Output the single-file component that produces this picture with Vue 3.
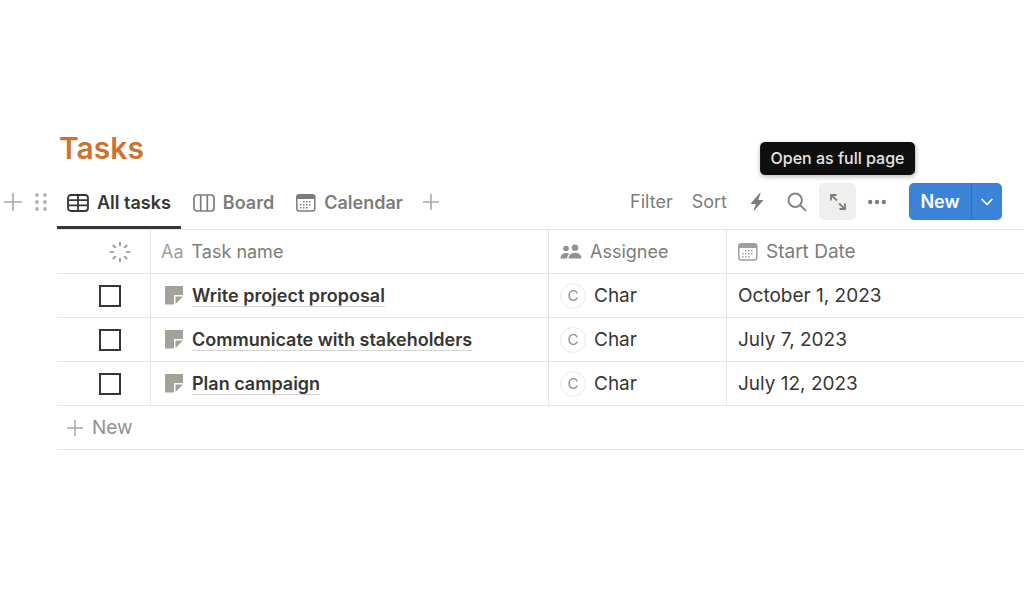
<script setup>
import { ref } from 'vue'

const tasks = ref([
  { name: 'Write project proposal', assignee: 'Char', date: 'October 1, 2023', done: false },
  { name: 'Communicate with stakeholders', assignee: 'Char', date: 'July 7, 2023', done: false },
  { name: 'Plan campaign', assignee: 'Char', date: 'July 12, 2023', done: false },
])
const rays = [0, 45, 90, 135, 180, 225, 270, 315]
</script>

<template>
  <main class="page">
    <h1>Tasks</h1>

    <div class="bar">
      <div class="gutter">
        <button class="bare" aria-label="Add block">
          <svg width="18" height="18" viewBox="0 0 18 18"><path d="M9 0v18M0 9h18" stroke="#a9a8a6" stroke-width="1.6" /></svg>
        </button>
        <button class="bare" aria-label="Drag">
          <svg width="12" height="20" viewBox="0 0 12 20" fill="#b3b2b0">
            <circle cx="2" cy="3" r="1.9" /><circle cx="10" cy="3" r="1.9" />
            <circle cx="2" cy="10" r="1.9" /><circle cx="10" cy="10" r="1.9" />
            <circle cx="2" cy="17" r="1.9" /><circle cx="10" cy="17" r="1.9" />
          </svg>
        </button>
      </div>

      <div class="toolbar">
        <nav class="tabs">
          <button class="tab active">
            <svg width="22" height="18" viewBox="0 0 22 18" fill="none" stroke="currentColor" stroke-width="1.8">
              <rect x="1" y="1" width="20" height="16" rx="3" /><path d="M1 6.2h20M1 11.4h20M11 1v16" />
            </svg>
            All tasks
          </button>
          <button class="tab">
            <svg width="22" height="18" viewBox="0 0 22 18" fill="none" stroke="currentColor" stroke-width="1.7">
              <rect x="1" y="1" width="20" height="16" rx="3" /><path d="M7.7 1v16M14.3 1v16" />
            </svg>
            Board
          </button>
          <button class="tab">
            <svg width="20" height="18" viewBox="0 0 20 18">
              <rect x=".8" y=".8" width="18" height="16.2" rx="2.5" fill="none" stroke="currentColor" stroke-width="1.5" />
              <path d="M.8 5V3A2.2 2.2 0 0 1 3 .8h13.6A2.2 2.2 0 0 1 18.8 3v2z" fill="currentColor" />
              <path d="M7 7.8h9M4 10.8h12M4 13.8h9" stroke="currentColor" stroke-width="1.5" stroke-dasharray="1.5 1.5" />
            </svg>
            Calendar
          </button>
          <button class="bare add" aria-label="Add view">
            <svg width="16" height="16" viewBox="0 0 16 16"><path d="M8 0v16M0 8h16" stroke="#a9a8a6" stroke-width="1.6" /></svg>
          </button>
        </nav>

        <div class="actions">
          <button class="bare text">Filter</button>
          <button class="bare text">Sort</button>
          <button class="bare icon" aria-label="Automations">
            <svg width="14" height="20" viewBox="0 0 14 20"><path d="M9.8 1 1 11.2q-.6.8.4.8h4.4L3.7 18.3q-.3 1.1.6.3L13 8.8q.6-.8-.4-.8H8.3l2.2-6.5q.2-1-.7-.5z" fill="#7d7c79" /></svg>
          </button>
          <button class="bare icon" aria-label="Search">
            <svg width="20" height="20" viewBox="0 0 20 20" fill="none" stroke="#858481" stroke-width="2" stroke-linecap="round"><circle cx="8.2" cy="8.2" r="6.7" /><path d="m13.2 13.2 5.2 5.2" /></svg>
          </button>
          <div class="full">
            <button class="expand" aria-label="Open as full page" aria-describedby="tip">
              <svg width="18" height="18" viewBox="0 0 18 18" fill="none" stroke="#7d7c79" stroke-width="1.8">
                <path d="M2 7.5V2h5.500M2.200 2.200l5.800 5.300M16 10.500V16h-5.500M15.800 15.800l-5.800-5.300" />
              </svg>
            </button>
            <span id="tip" class="tip" role="tooltip">Open as full page</span>
          </div>
          <button class="bare icon" aria-label="More">
            <svg width="18" height="6" viewBox="0 0 18 6" fill="#7d7c79"><circle cx="2.2" cy="3" r="2.2" /><circle cx="9" cy="3" r="2.2" /><circle cx="15.8" cy="3" r="2.2" /></svg>
          </button>
          <div class="split">
            <button class="new">New</button>
            <button class="caret" aria-label="New options">
              <svg width="12" height="8" viewBox="0 0 12 8" fill="none" stroke="#fff" stroke-width="1.8" stroke-linecap="round" stroke-linejoin="round"><path d="m1.2 1.5 4.8 5 4.8-5" /></svg>
            </button>
          </div>
        </div>
      </div>
    </div>

    <div class="grid">
      <table>
        <colgroup><col class="c-check" /><col class="c-name" /><col class="c-who" /><col /></colgroup>
        <thead>
          <tr>
            <th scope="col" aria-label="Status">
              <div class="status">
                <svg width="22" height="22" viewBox="0 0 22 22" stroke="#92918e" stroke-width="1.7" stroke-linecap="round">
                  <path v-for="r in rays" :key="r" d="M11 1.5v3" :transform="`rotate(${r} 11 11)`" />
                </svg>
              </div>
            </th>
            <th scope="col"><div class="cell title"><span class="aa">Aa</span>Task name</div></th>
            <th scope="col">
              <div class="cell">
                <svg width="22" height="16" viewBox="0 0 22 16" fill="#92918e">
                  <circle cx="6" cy="4.5" r="2.8" /><circle cx="15" cy="3.8" r="3.2" />
                  <path d="M.5 14.5C.5 11 3 9 6 9q2 0 3.300.9C7.800 11 7.200 12.500 7.200 14.500z" />
                  <path d="M8.500 14.500C8.500 11 11.500 8.800 15 8.800s6.500 2.200 6.500 5.700z" />
                </svg>
                Assignee
              </div>
            </th>
            <th scope="col" class="date">
              <div class="cell">
                <svg width="20" height="18" viewBox="0 0 20 18" color="#a09f9c">
                  <rect x=".8" y=".8" width="18" height="16.2" rx="2.5" fill="none" stroke="currentColor" stroke-width="1.5" />
                  <path d="M.8 5V3A2.2 2.2 0 0 1 3 .8h13.6A2.2 2.2 0 0 1 18.8 3v2z" fill="currentColor" />
                  <path d="M7 7.8h9M4 10.8h12M4 13.8h9" stroke="currentColor" stroke-width="1.5" stroke-dasharray="1.5 1.5" />
                </svg>
                Start Date
              </div>
            </th>
          </tr>
        </thead>
        <tbody>
          <tr v-for="t in tasks" :key="t.name">
            <td><div class="check"><input v-model="t.done" type="checkbox" :aria-label="t.name" /></div></td>
            <td>
              <div class="cell task">
                <svg width="19" height="19" viewBox="0 0 19 19" fill="#a3a199"><path d="M0 0h18v9H9v9.500H0z" /><path d="M10.500 10.500H18L10.500 18z" /></svg>
                <a href="#">{{ t.name }}</a>
              </div>
            </td>
            <td><div class="cell"><span class="avatar">{{ t.assignee[0] }}</span>{{ t.assignee }}</div></td>
            <td class="date"><div class="cell">{{ t.date }}</div></td>
          </tr>
        </tbody>
      </table>
      <button class="bare row-new">
        <svg width="16" height="16" viewBox="0 0 16 16"><path d="M8 0v16M0 8h16" stroke="#a9a8a6" stroke-width="1.5" /></svg>
        New
      </button>
    </div>
  </main>
</template>

<style>
body { background: #fff; }
</style>

<style scoped>
* { box-sizing: border-box; }
.page {
  padding-top: 128px;
  font: 400 19px/24px Inter, "Liberation Sans", sans-serif;
  color: #373633;
}
svg { display: block; flex: none; }
button { font: inherit; cursor: pointer; border: 0; margin: 0; }
h1 { margin: 0 0 14px 59px; font-size: 30px; line-height: 41px; font-weight: 600; color: #cb7430; }
.bare { background: none; padding: 0; color: #7d7c79; display: flex; align-items: center; }
.bar { display: flex; }
.gutter { width: 57px; height: 37px; display: flex; align-items: center; padding-left: 4px; gap: 13px; }
.toolbar { flex: 1; display: flex; justify-content: space-between; border-bottom: 1px solid #e6e6e5; padding-right: 22px; }
.tabs { display: flex; align-items: flex-start; gap: 2px; }
.tab {
  display: flex; align-items: center; gap: 8px; height: 46px; padding: 0 10px 4px;
  background: none; color: #7d7c79; font-size: 18px; font-weight: 600; border-bottom: 3px solid transparent;
}
.tab.active { color: #373633; border-bottom-color: #373633; }
.add { height: 37px; margin-left: 8px; }
.actions { display: flex; align-items: center; height: 37px; }
.text { margin-right: 19px; font-size: 18px; }
.text + .icon { margin-left: 4px; }
.icon { margin-right: 23px; height: 37px; }
.icon:has(+ .full) { margin-right: 12px; }
.full { position: relative; margin-right: 12px; }
.expand {
  width: 37px; height: 37px; border-radius: 5px; background: #efefee; padding: 0;
  display: flex; align-items: center; justify-content: center;
}
.tip {
  position: absolute; bottom: 45px; left: 50%; transform: translateX(-50%);
  padding: 5px 11px; border-radius: 5px; background: #0f0f0f; color: #e6e5e3;
  font-size: 16px; line-height: 23px; font-weight: 500; white-space: nowrap;
  box-shadow: 0 2px 5px rgba(0, 0, 0, .25);
}
.split { display: flex; height: 37px; border-radius: 5px; overflow: hidden; background: #3b82d9; }
.new { width: 62px; padding: 0; background: none; color: #fff; font-size: 18px; font-weight: 600; }
.caret { width: 31px; padding: 0; background: none; border-left: 1px solid #2f6fbe; display: flex; align-items: center; justify-content: center; }
.grid { margin-left: 57px; }
table { width: 100%; table-layout: fixed; border-collapse: separate; border-spacing: 0; }
.c-check { width: 94px; }
.c-name { width: 398px; }
.c-who { width: 178px; }
th, td { height: 44px; padding: 0; text-align: left; border-bottom: 1px solid #e6e6e5; border-right: 1px solid #e6e6e5; }
th:last-child, td:last-child { border-right: 0; }
th { font-weight: 400; font-size: 18px; color: #7d7c79; }
.date { font-size: 19px; }
.cell { display: flex; align-items: center; gap: 8px; padding-left: 11px; }
.title { padding-left: 10px; }
.aa { color: #a09f9c; }
.status { display: flex; justify-content: flex-end; padding-right: 19px; }
.check { display: flex; justify-content: center; padding-left: 12px; }
input { appearance: none; width: 22px; height: 22px; margin: 0; border: 2px solid #373633; background: #fff; }
input:checked { background: #3b82d9; }
.task { padding-left: 14px; }
.task a { color: inherit; text-decoration: none; font-size: 18px; font-weight: 600; line-height: 21px; border-bottom: 1px solid #d5d4d2; }
.avatar {
  width: 26px; height: 26px; border: 1px solid #e9e9e8; border-radius: 50%; color: #92918e;
  font-size: 15px; line-height: 24px; text-align: center;
}
.row-new { width: 100%; height: 44px; padding-left: 10px; gap: 9px; color: #92918e; border-bottom: 1px solid #e6e6e5; }
</style>
